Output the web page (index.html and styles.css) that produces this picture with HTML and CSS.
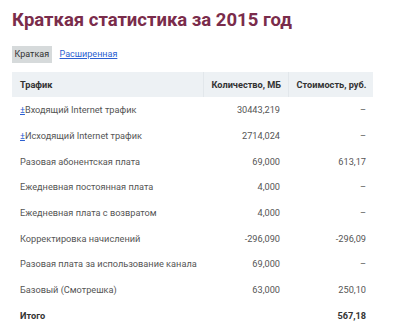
FILE: index.html
```html
<!DOCTYPE html>
<html lang="ru">
<head>
<meta charset="utf-8">
<link rel="stylesheet" href="styles.css">
</head>
<body>
<h1 class="title">Краткая статистика за 2015 год</h1>
<div class="tabs">
  <span class="tab active">Краткая</span>
  <a class="tab link" href="#">Расширенная</a>
</div>
<table class="stats">
  <colgroup>
    <col class="c-name">
    <col class="c-num">
    <col class="c-num">
  </colgroup>
  <thead>
    <tr><th>Трафик</th><th class="num">Количество, МБ</th><th class="num">Стоимость, руб.</th></tr>
  </thead>
  <tbody>
    <tr><td><a class="exp" href="#">±</a>Входящий Internet трафик</td><td class="num">30443,219</td><td class="num">–</td></tr>
    <tr><td><a class="exp" href="#">±</a>Исходящий Internet трафик</td><td class="num">2714,024</td><td class="num">–</td></tr>
    <tr><td>Разовая абонентская плата</td><td class="num">69,000</td><td class="num">613,17</td></tr>
    <tr><td>Ежедневная постоянная плата</td><td class="num">4,000</td><td class="num">–</td></tr>
    <tr><td>Ежедневная плата с возвратом</td><td class="num">4,000</td><td class="num">–</td></tr>
    <tr><td>Корректировка начислений</td><td class="num">-296,090</td><td class="num">-296,09</td></tr>
    <tr><td>Разовая плата за использование канала</td><td class="num">69,000</td><td class="num">–</td></tr>
    <tr><td>Базовый (Смотрешка)</td><td class="num">63,000</td><td class="num">250,10</td></tr>
    <tr class="total"><td>Итого</td><td class="num"></td><td class="num">567,18</td></tr>
  </tbody>
</table>
</body>
</html>
```
FILE: styles.css
```css
html, body { margin: 0; padding: 0; background: #fff; }
body {
  font-family: Roboto, "Liberation Sans", sans-serif;
  padding: 0 12px;
  color: #555;
}
.title {
  margin: 0;
  padding-top: 9px;
  font-size: 18.5px;
  line-height: 22px;
  font-weight: 700;
  color: #7a2c4b;
}
.tabs {
  margin-top: 15px;
  display: flex;
  align-items: center;
  gap: 8px;
  font-size: 9px;
  line-height: 11px;
}
.tab { padding: 3px 2.5px; }
.tab.active { background: #d6dadb; color: #333; }
.tab.link { color: #2b5fd1; text-decoration: underline; padding-left: 0; }
.stats {
  margin-top: 9px;
  width: 361px;
  border-collapse: collapse;
  table-layout: fixed;
  font-size: 9.2px;
  line-height: 11px;
}
.c-name { width: 191px; }
.c-num { width: 85px; }
.stats th, .stats td {
  padding: 0 8px;
  text-align: left;
  white-space: nowrap;
}
.stats th {
  height: 25px;
  background: #edf1f4;
  color: #333;
  font-weight: 700;
}
.stats th + th { border-left: 1px solid #e2e7eb; }
.stats td { height: 25.7px; color: #555; }
.stats .num { text-align: right; }
.stats td.num:last-child, .stats th.num:last-child { padding-right: 7px; }
.exp { color: #2b5fd1; text-decoration: underline; }
.total td { font-weight: 700; color: #333; }
```
